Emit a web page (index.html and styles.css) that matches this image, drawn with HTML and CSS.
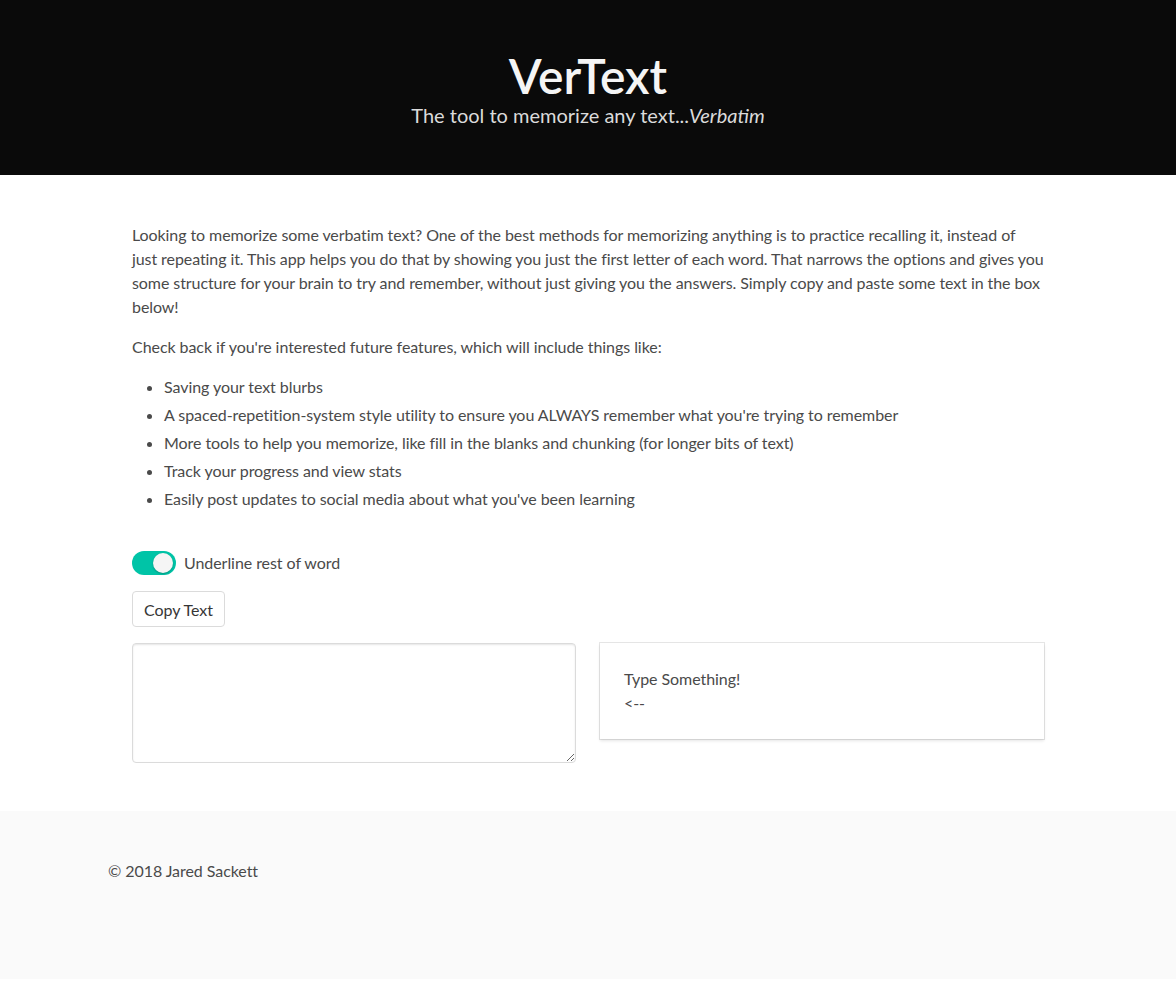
FILE: index.html
```html
<!DOCTYPE html>
<html lang="en">
<head>
<meta charset="utf-8">
<title>VerText</title>
<link rel="stylesheet" href="styles.css">
</head>
<body>
<header class="hero">
  <h1 class="hero-title">VerText</h1>
  <p class="hero-subtitle">The tool to memorize any text...<em>Verbatim</em></p>
</header>

<section class="section">
  <div class="container">
    <div class="content">
      <p class="intro">Looking to memorize some verbatim text? One of the best methods for memorizing anything is to practice recalling it, instead of<br>just repeating it. This app helps you do that by showing you just the first letter of each word. That narrows the options and gives you<br>some structure for your brain to try and remember, without just giving you the answers. Simply copy and paste some text in the box<br>below!</p>
      <p>Check back if you're interested future features, which will include things like:</p>
      <ul class="features">
        <li>Saving your text blurbs</li>
        <li>A spaced-repetition-system style utility to ensure you ALWAYS remember what you're trying to remember</li>
        <li>More tools to help you memorize, like fill in the blanks and chunking (for longer bits of text)</li>
        <li>Track your progress and view stats</li>
        <li>Easily post updates to social media about what you've been learning</li>
      </ul>

      <label class="switch-field">
        <span class="switch"><span class="knob"></span></span>
        <span class="switch-label">Underline rest of word</span>
      </label>

      <div class="button-row">
        <button class="button" type="button">Copy Text</button>
      </div>

      <div class="columns">
        <div class="column">
          <textarea class="textarea"></textarea>
        </div>
        <div class="column">
          <div class="card">
            <div class="card-content">
              <div>Type Something!</div>
              <div>&lt;--</div>
            </div>
          </div>
        </div>
      </div>
    </div>
  </div>
</section>

<footer class="footer">
  <div class="footer-container">© 2018 Jared Sackett</div>
</footer>
</body>
</html>
```
FILE: styles.css
```css
html {
  background: #fff;
}
body {
  margin: 0;
  font-family: Lato, "Open Sans", sans-serif;
  font-size: 16px;
  line-height: 24px;
  color: #4a4a4a;
  letter-spacing: -0.06px;
}

/* Hero */
.hero {
  background: #0a0a0a;
  padding: 49px 24px 47px;
  text-align: center;
}
.hero-title {
  margin: 0;
  font-size: 48px;
  line-height: 54px;
  font-weight: 600;
  color: #f5f5f5;
  letter-spacing: 0;
}
.hero-subtitle {
  margin: 0;
  font-size: 20px;
  line-height: 25px;
  color: #dbdbdb;
  letter-spacing: 0;
}
.hero-subtitle em {
  font-style: italic;
}

/* Main section */
.section {
  padding: 48px 24px;
}
.container {
  max-width: 960px;
  margin: 0 auto;
}
.content {
  padding: 0 24px;
}
.content p {
  margin: 0 0 16px;
}
.content .intro {
  white-space: nowrap;
  letter-spacing: -0.08px;
}
.features {
  margin: 0 0 40px 32px;
  padding: 0;
  list-style: disc;
}
.features li + li {
  margin-top: 4px;
}

/* Switch */
.switch-field {
  display: flex;
  align-items: center;
  gap: 8px;
  height: 24px;
  cursor: pointer;
}
.switch {
  position: relative;
  width: 44px;
  height: 24px;
  border-radius: 12px;
  background: #00c4a7;
  flex: none;
}
.knob {
  position: absolute;
  top: 2px;
  right: 3px;
  width: 20px;
  height: 20px;
  border-radius: 50%;
  background: #f5f5f5;
  box-shadow: 0 1px 2px rgba(0, 0, 0, 0.25);
}

/* Button */
.button-row {
  margin-top: 16px;
}
.button {
  display: block;
  box-sizing: border-box;
  height: 36px;
  padding: 0 11px;
  border: 1px solid #dbdbdb;
  border-radius: 4px;
  background: #fff;
  color: #363636;
  font-family: inherit;
  font-size: 16px;
  letter-spacing: inherit;
  cursor: pointer;
}

/* Columns */
.columns {
  display: grid;
  grid-template-columns: 1fr 1fr;
  gap: 24px;
  margin-top: 16px;
  align-items: start;
}
.textarea {
  display: block;
  box-sizing: border-box;
  width: 100%;
  height: 120px;
  padding: 10px;
  border: 1px solid #dbdbdb;
  border-radius: 4px;
  box-shadow: inset 0 1px 2px rgba(10, 10, 10, 0.1);
  font-family: inherit;
  font-size: 16px;
  color: #363636;
  resize: vertical;
}
.card {
  background: #fff;
  box-shadow: 0 2px 3px rgba(10, 10, 10, 0.1), 0 0 0 1px rgba(10, 10, 10, 0.1);
}
.card-content {
  padding: 24px;
}

/* Footer */
.footer {
  background: #fafafa;
  padding: 48px 24px 96px;
}
.footer-container {
  max-width: 960px;
  margin: 0 auto;
}
```
